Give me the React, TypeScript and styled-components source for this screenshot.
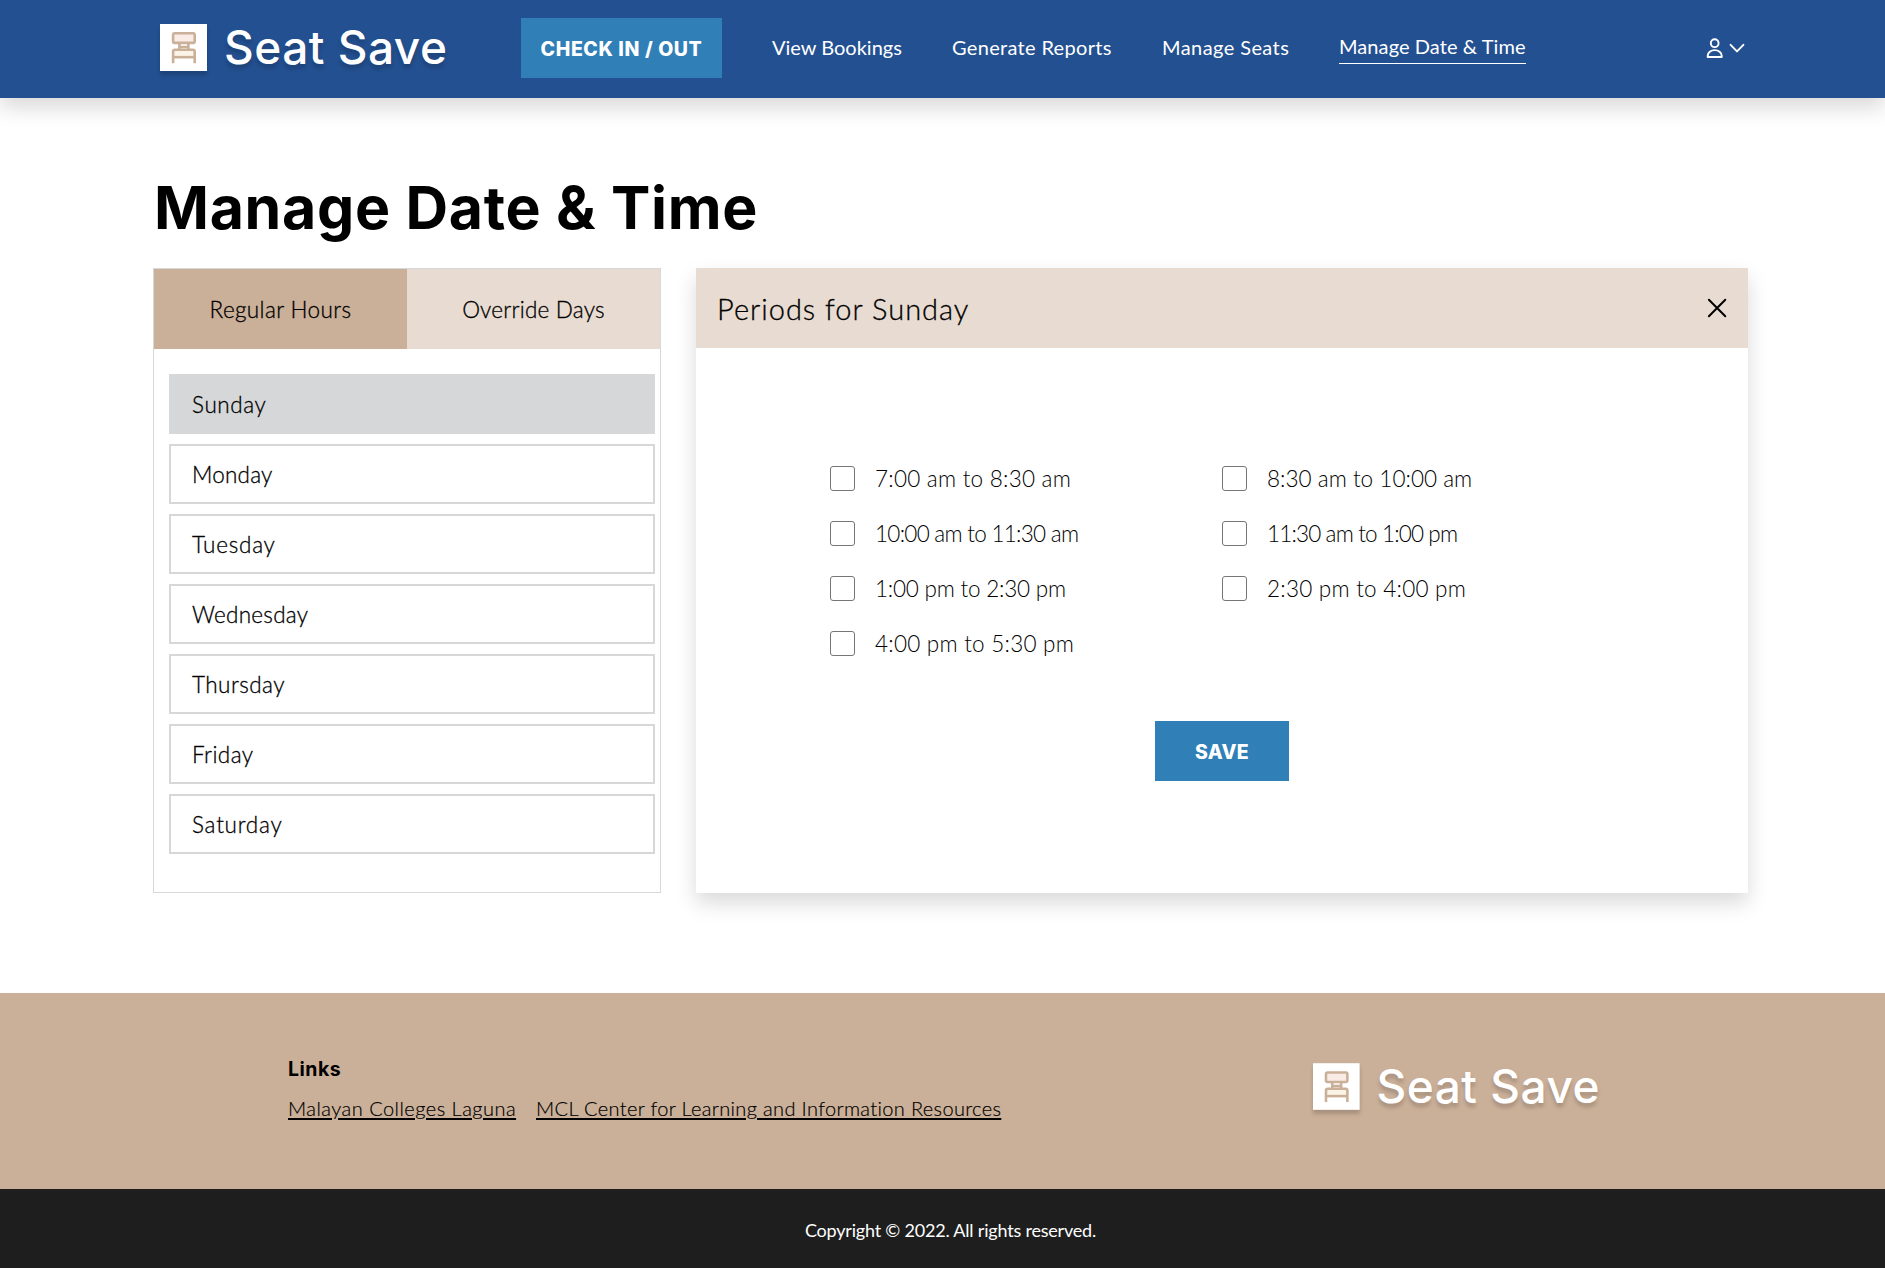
import React, { useState } from "react";
import styled, { createGlobalStyle } from "styled-components";

const blue = "#235091";
const accent = "#307fb7";
const tan = "#cbb099";
const sand = "#e8dbd1";
const grey = "#d6d7d9";
const sans = `Lato, "Open Sans", sans-serif`;
const display = `Inter, Lato, sans-serif`;

const GlobalStyle = createGlobalStyle`
  *, *::before, *::after { box-sizing: border-box; }
  body { margin: 0; background: #fff; color: #000; font-family: ${sans}; }
  button { border: 0; padding: 0; background: none; font: inherit; color: inherit; cursor: pointer; }
`;

const Page = styled.div`
  display: flex;
  flex-direction: column;
  height: 1268px;
  overflow: hidden;
`;

const Text = styled.span<{ $track?: number }>`
  letter-spacing: ${(p) => p.$track ?? 0}px;
  white-space: nowrap;
`;

/* Header */
const Header = styled.header`
  display: flex;
  align-items: center;
  height: 98px;
  flex: none;
  padding: 0 140px 2px 160px;
  background: ${blue};
  color: #fff;
  box-shadow: 0 10px 20px rgba(0, 0, 0, 0.15);
`;

const Logo = styled.div`
  display: flex;
  align-items: center;
  gap: 17px;
  color: #fff;
`;

const LogoMark = styled.svg`
  display: block;
  width: 47px;
  height: 47px;
  box-shadow: 0 4px 4px rgba(0, 0, 0, 0.18);
`;

const LogoName = styled.span`
  font: 500 46px/56px ${display};
  letter-spacing: 0.5px;
  white-space: nowrap;
  text-shadow: 0 4px 4px rgba(0, 0, 0, 0.2);
`;

const HeaderLogo = styled.div`
  width: 361px;
  padding-bottom: 2px;
`;

const FooterLogo = styled.div`
  width: 287px;
  padding-top: 1px;
`;

const SolidButton = styled.button<{ $width: number }>`
  width: ${(p) => p.$width}px;
  height: 60px;
  flex: none;
  padding-top: 2px;
  background: ${accent};
  color: #fff;
  font: 800 19.5px/24px ${display};
`;

const Nav = styled.nav`
  display: flex;
  align-items: center;
  gap: 50px;
  margin-left: 50px;
`;

const NavLink = styled.a<{ $active?: boolean; $width: number }>`
  width: ${(p) => p.$width}px;
  flex: none;
  font-size: 20px;
  line-height: 28px;
  padding-bottom: ${(p) => (p.$active ? 3 : 2)}px;
  border-bottom: ${(p) => (p.$active ? "1px solid #fff" : "0")};
`;

const UserMenu = styled.button`
  display: flex;
  align-items: center;
  gap: 6px;
  margin-left: auto;
`;

const Icon = styled.svg`
  display: block;
  fill: none;
  stroke: currentColor;
`;

/* Main */
const Main = styled.main`
  height: 895px;
  flex: none;
  padding: 73px 137px 100px 153px;
`;

const Title = styled.h1`
  margin: 0;
  height: 97px;
  padding-left: 1px;
  font: 700 59px/74px ${display};
  letter-spacing: 0.7px;
`;

const Columns = styled.div`
  display: flex;
  gap: 35px;
  height: 625px;
`;

const DaysPanel = styled.section`
  width: 508px;
  border: 1px solid ${grey};
`;

const Tabs = styled.div`
  display: grid;
  grid-template-columns: 1fr 1fr;
  height: 80px;
`;

const Tab = styled.button<{ $active: boolean }>`
  background: ${(p) => (p.$active ? tan : sand)};
  font-size: 22.5px;
  font-weight: 300;
  -webkit-text-stroke: 0.3px #000;
`;

const DayList = styled.div`
  display: flex;
  flex-direction: column;
  gap: 10px;
  padding: 25px 5px 0 15px;
`;

const Day = styled.button<{ $active: boolean }>`
  height: 60px;
  padding: 0 21px;
  border: 2px solid ${grey};
  background: ${(p) => (p.$active ? grey : "#fff")};
  text-align: left;
  font-size: 22.5px;
  font-weight: 300;
  -webkit-text-stroke: 0.3px #000;
`;

const PeriodsPanel = styled.section`
  flex: 1;
  display: flex;
  flex-direction: column;
  background: #fff;
  box-shadow: 0 10px 20px rgba(0, 0, 0, 0.15);
`;

const PanelHead = styled.div`
  display: flex;
  align-items: center;
  justify-content: space-between;
  height: 80px;
  padding: 0 21px;
  background: ${sand};
`;

const PanelTitle = styled.h2`
  margin: 0;
  font-size: 29px;
  font-weight: 300;
  -webkit-text-stroke: 0.3px #000;
`;

const PeriodGrid = styled.div`
  display: grid;
  grid-template-columns: 392px 392px;
  grid-auto-rows: 25px;
  row-gap: 30px;
  padding: 118px 0 0 134px;
`;

const Period = styled.label`
  display: flex;
  align-items: center;
  gap: 20px;
  font-size: 22.5px;
  font-weight: 300;
`;

const Checkbox = styled.input`
  appearance: none;
  width: 25px;
  height: 25px;
  margin: 0;
  border: 1px solid #767676;
  border-radius: 3px;
  background: #fff;
  &:checked { background: ${accent}; }
`;

const Actions = styled.div`
  display: flex;
  justify-content: center;
  padding-top: 65px;
`;

/* Footer */
const Footer = styled.footer`
  display: flex;
  justify-content: space-between;
  height: 196px;
  flex: none;
  padding: 64px 285px 0 288px;
  background: ${tan};
`;

const Links = styled.div``;

const LinksTitle = styled.h3`
  margin: 0 0 10px;
  font: 700 19.5px/24px ${display};
  letter-spacing: 0.5px;
`;

const LinkRow = styled.div`
  display: flex;
  gap: 20px;
`;

const FooterLink = styled.a<{ $width: number }>`
  width: ${(p) => p.$width}px;
  height: 28px;
  font-size: 20px;
  font-weight: 300;
  line-height: 34px;
  text-decoration: underline;
  text-decoration-thickness: 1.5px;
  text-underline-offset: 2px;
  -webkit-text-stroke: 0.2px #000;
  white-space: nowrap;
`;

const Copyright = styled.div`
  flex: 1;
  display: flex;
  justify-content: center;
  padding: 27px 0 0 16px;
  background: #1e1e1e;
  color: #fff;
  font-size: 18px;
  line-height: 28px;
`;

function SeatSaveLogo() {
  return (
    <Logo>
      <LogoMark viewBox="0 0 47 47">
        <rect width="47" height="47" fill="#fff" />
        <g fill="none" stroke={tan} strokeWidth="2.6" strokeLinejoin="round">
          <rect x="13.1" y="9.3" width="21.6" height="9.6" rx="1.6" fill="#f9ece6" />
          <path d="M19.4 18.9v6.6M28.4 18.9v6.6M19.4 23h9" />
          <path d="M13.1 27.6q0-1.9 1.9-1.9h17.8q1.9 0 1.9 1.9v5.6H13.1z" fill="#fbf3e6" stroke="none" />
          <path d="M13.1 39.2V27.6q0-1.9 1.9-1.9h17.8q1.9 0 1.9 1.9v11.6" />
          <path d="M13.1 33.2h21.6" />
        </g>
      </LogoMark>
      <LogoName>Seat Save</LogoName>
    </Logo>
  );
}

const navItems = [
  { label: "View Bookings", width: 130, track: 0 },
  { label: "Generate Reports", width: 160, track: 0.32 },
  { label: "Manage Seats", width: 127, track: 0.42 },
  { label: "Manage Date & Time", width: 187, track: 0.08, active: true },
];

const days = [
  { label: "Sunday", track: 0.6 },
  { label: "Monday", track: 0.2 },
  { label: "Tuesday", track: 0.75 },
  { label: "Wednesday", track: 0.27 },
  { label: "Thursday", track: 0.45 },
  { label: "Friday", track: 0.4 },
  { label: "Saturday", track: 0.75 },
];

const periods = [
  { label: "7:00 am to 8:30 am", track: 0.24 },
  { label: "8:30 am to 10:00 am", track: 0.02 },
  { label: "10:00 am to 11:30 am", track: -0.73 },
  { label: "11:30 am to 1:00 pm", track: -0.85 },
  { label: "1:00 pm to 2:30 pm", track: -0.22 },
  { label: "2:30 pm to 4:00 pm", track: 0.24 },
  { label: "4:00 pm to 5:30 pm", track: 0.24 },
];

export default function App() {
  const [tab, setTab] = useState(0);
  const [day, setDay] = useState("Sunday");

  return (
    <Page>
      <GlobalStyle />
      <Header>
        <HeaderLogo>
          <SeatSaveLogo />
        </HeaderLogo>
        <SolidButton $width={201}>
          <Text $track={0.6}>CHECK IN / OUT</Text>
        </SolidButton>
        <Nav>
          {navItems.map((n) => (
            <NavLink key={n.label} $active={n.active} $width={n.width}>
              <Text $track={n.track}>{n.label}</Text>
            </NavLink>
          ))}
        </Nav>
        <UserMenu aria-label="Account">
          <Icon width="17" height="22" viewBox="0 0 17 22" strokeWidth="1.9" strokeLinejoin="round">
            <circle cx="8.7" cy="6.2" r="3.9" />
            <path d="M1.7 20v-1.2a7 5.7 0 0 1 14 0v1.2z" />
          </Icon>
          <Icon width="16" height="12" viewBox="0 0 16 12" strokeWidth="1.9" strokeLinecap="round" strokeLinejoin="round">
            <path d="M1.6 2.8 8 9.4l6.4-6.6" />
          </Icon>
        </UserMenu>
      </Header>

      <Main>
        <Title>Manage Date &amp; Time</Title>
        <Columns>
          <DaysPanel>
            <Tabs>
              <Tab $active={tab === 0} onClick={() => setTab(0)}>
                <Text $track={0.38}>Regular Hours</Text>
              </Tab>
              <Tab $active={tab === 1} onClick={() => setTab(1)}>
                <Text $track={0.22}>Override Days</Text>
              </Tab>
            </Tabs>
            <DayList>
              {days.map((d) => (
                <Day key={d.label} $active={day === d.label} onClick={() => setDay(d.label)}>
                  <Text $track={d.track}>{d.label}</Text>
                </Day>
              ))}
            </DayList>
          </DaysPanel>

          <PeriodsPanel>
            <PanelHead>
              <PanelTitle>
                <Text $track={1}>Periods for {day}</Text>
              </PanelTitle>
              <button aria-label="Close">
                <Icon width="20" height="20" viewBox="0 0 20 20" strokeWidth="2" strokeLinecap="round">
                  <path d="M1.9 1.7l16.4 16.6M18.3 1.7L1.9 18.3" />
                </Icon>
              </button>
            </PanelHead>
            <PeriodGrid>
              {periods.map((p) => (
                <Period key={p.label}>
                  <Checkbox type="checkbox" />
                  <Text $track={p.track}>{p.label}</Text>
                </Period>
              ))}
            </PeriodGrid>
            <Actions>
              <SolidButton $width={134}>
                <Text $track={0.3}>SAVE</Text>
              </SolidButton>
            </Actions>
          </PeriodsPanel>
        </Columns>
      </Main>

      <Footer>
        <Links>
          <LinksTitle>Links</LinksTitle>
          <LinkRow>
            <FooterLink $width={228}>
              <Text $track={0.47}>Malayan Colleges Laguna</Text>
            </FooterLink>
            <FooterLink $width={466}>
              <Text $track={0.35}>MCL Center for Learning and Information Resources</Text>
            </FooterLink>
          </LinkRow>
        </Links>
        <FooterLogo>
          <SeatSaveLogo />
        </FooterLogo>
      </Footer>
      <Copyright>
        <Text $track={-0.2}>Copyright © 2022. All rights reserved.</Text>
      </Copyright>
    </Page>
  );
}
